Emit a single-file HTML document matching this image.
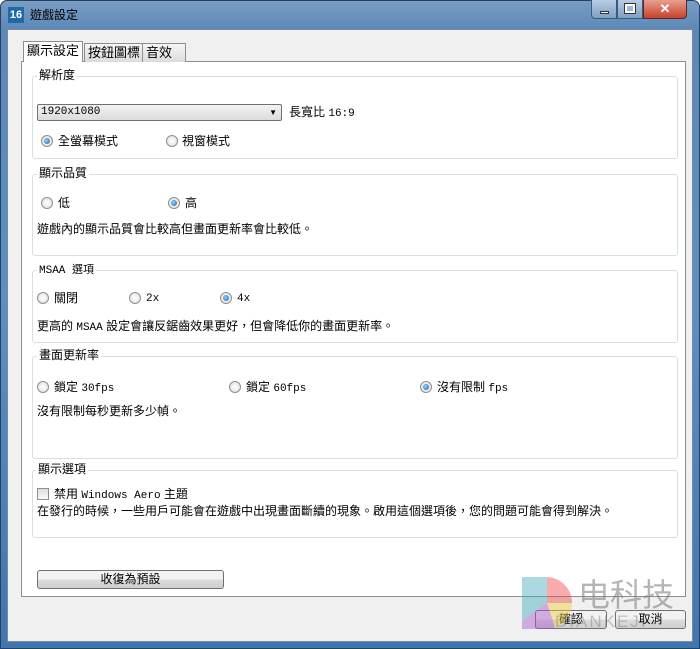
<!DOCTYPE html>
<html><head><meta charset="utf-8"><style>
*{margin:0;padding:0;box-sizing:border-box}
body{width:700px;height:649px;overflow:hidden;background:#fff;font-family:"Liberation Sans","Noto Sans CJK TC",sans-serif;font-size:12px;color:#000;position:relative}
.a{position:absolute}
.frame{left:0;top:0;width:700px;height:649px;background:linear-gradient(#7a9dc4,#5a88b8 30px,#5d8fc2 300px,#3f76b0);border-radius:7px 7px 0 0;border:1px solid #28415f}
.client{left:7px;top:29px;width:686px;height:613px;background:#f0f0f0;border:1px solid #7a8a9b}
.panel{left:21px;top:61px;width:665px;height:536px;background:#fff;border:1px solid #8a8f96}
.tab{top:43px;height:19px;border:1px solid #8a8f96;border-bottom:none;background:linear-gradient(#f6f6f6,#dcdcdc);font-size:13px;line-height:17px;padding:0 3px}
.grp{left:32px;width:646px;border:1px solid #d5dfe5;border-radius:3px}
.lg{font-size:12px;background:#fff;padding:0 2px;line-height:14px}
.r{width:12px;height:12px;border-radius:50%;border:1px solid #8f8f8f;background:radial-gradient(#fff,#ddd)}
.r.on::after{content:"";position:absolute;left:2px;top:2px;width:6px;height:6px;border-radius:50%;background:radial-gradient(circle at 40% 40%,#8fd0ff,#1d5fa8)}
.t{font-size:12px;line-height:14px;white-space:nowrap}
.m{font-family:"Liberation Mono","Noto Sans CJK TC",monospace;font-size:11px}
.btn{border:1px solid #707070;border-radius:3px;background:linear-gradient(#f2f2f2 50%,#dcdcdc 50%,#cfcfcf);text-align:center;font-size:12px;line-height:16px}
</style></head><body>
<div class="a frame"></div>
<div class="a" style="left:8px;top:7px;width:16px;height:16px;background:#1d6aa8;color:#fff;font-weight:bold;font-size:11px;line-height:16px;text-align:center">16</div>
<div class="a t" style="left:30px;top:8px;font-size:12px">遊戲設定</div>
<div class="a" style="left:591px;top:0;width:26px;height:19px;border:1px solid #3a5b80;border-top:none;border-radius:0 0 0 4px;background:linear-gradient(#b9cde3,#7f9fc4)"><div class="a" style="left:8px;top:11px;width:9px;height:3px;background:#fff;border:1px solid #333"></div></div>
<div class="a" style="left:617px;top:0;width:26px;height:19px;border:1px solid #3a5b80;border-top:none;background:linear-gradient(#b9cde3,#7f9fc4)"><div class="a" style="left:7px;top:4px;width:10px;height:9px;border:2px solid #fff;outline:1px solid #333"></div></div>
<div class="a" style="left:643px;top:0;width:44px;height:19px;border:1px solid #5a2a20;border-top:none;border-radius:0 0 4px 0;background:linear-gradient(#e8a090,#c8412a);color:#fff;font-weight:bold;text-align:center;font-size:13px;line-height:17px">✕</div>
<div class="a client"></div>
<div class="a panel"></div>
<div class="a tab" style="left:23px;top:41px;height:21px;background:#fff;z-index:2">顯示設定</div>
<div class="a tab" style="left:84px">按鈕圖標</div>
<div class="a tab" style="left:142px;width:44px">音效</div>

<div class="a grp" style="top:76px;height:83px"></div>
<div class="a lg" style="left:37px;top:68px">解析度</div>
<div class="a" style="left:37px;top:104px;width:245px;height:17px;border:1px solid #707070;border-radius:2px;background:linear-gradient(#f2f2f2,#dcdcdc)"><span class="a m" style="left:3px;top:1px">1920x1080</span><span class="a" style="right:4px;top:3px;font-size:8px">▼</span></div>
<div class="a t" style="left:289px;top:105px">長寬比 <span class="m">16:9</span></div>
<div class="a r on" style="left:41px;top:135px"></div><div class="a t" style="left:58px;top:134px">全螢幕模式</div>
<div class="a r" style="left:166px;top:135px"></div><div class="a t" style="left:182px;top:134px">視窗模式</div>

<div class="a grp" style="top:174px;height:82px"></div>
<div class="a lg" style="left:37px;top:166px">顯示品質</div>
<div class="a r" style="left:41px;top:197px"></div><div class="a t" style="left:58px;top:196px">低</div>
<div class="a r on" style="left:168px;top:197px"></div><div class="a t" style="left:185px;top:196px">高</div>
<div class="a t" style="left:37px;top:222px">遊戲內的顯示品質會比較高但畫面更新率會比較低。</div>

<div class="a grp" style="top:270px;height:73px"></div>
<div class="a lg m" style="left:37px;top:262px">MSAA <span style="font-family:'Noto Sans CJK TC'">選項</span></div>
<div class="a r" style="left:37px;top:292px"></div><div class="a t" style="left:54px;top:291px">關閉</div>
<div class="a r" style="left:129px;top:292px"></div><div class="a t m" style="left:146px;top:292px">2x</div>
<div class="a r on" style="left:220px;top:292px"></div><div class="a t m" style="left:237px;top:292px">4x</div>
<div class="a t" style="left:37px;top:319px">更高的 <span class="m">MSAA</span> 設定會讓反鋸齒效果更好，但會降低你的畫面更新率。</div>

<div class="a grp" style="top:356px;height:103px"></div>
<div class="a lg" style="left:37px;top:348px">畫面更新率</div>
<div class="a r" style="left:37px;top:381px"></div><div class="a t" style="left:54px;top:380px">鎖定 <span class="m">30fps</span></div>
<div class="a r" style="left:229px;top:381px"></div><div class="a t" style="left:246px;top:380px">鎖定 <span class="m">60fps</span></div>
<div class="a r on" style="left:420px;top:381px"></div><div class="a t" style="left:437px;top:380px">沒有限制 <span class="m">fps</span></div>
<div class="a t" style="left:37px;top:404px">沒有限制每秒更新多少幀。</div>

<div class="a grp" style="top:470px;height:68px"></div>
<div class="a lg" style="left:36px;top:462px">顯示選項</div>
<div class="a" style="left:37px;top:488px;width:12px;height:12px;border:1px solid #8f8f8f;background:linear-gradient(#ddd,#fafafa)"></div>
<div class="a t" style="left:54px;top:487px">禁用 <span class="m">Windows Aero</span> 主題</div>
<div class="a t" style="left:37px;top:504px">在發行的時候，一些用戶可能會在遊戲中出現畫面斷續的現象。啟用這個選項後，您的問題可能會得到解決。</div>

<div class="a btn" style="left:37px;top:570px;width:187px;height:19px">收復為預設</div>
<div class="a btn" style="left:535px;top:610px;width:72px;height:19px">確認</div>
<div class="a btn" style="left:615px;top:610px;width:71px;height:19px">取消</div>
<div class="a" style="left:522px;top:577px;width:50px;height:52px;opacity:.45;background:conic-gradient(#e44 0 25%,#ec3 25% 45%,#a5c 45% 65%,#4ab 65% 100%);border-radius:0 26px 26px 0"></div>
<div class="a" style="left:578px;top:578px;font-size:32px;color:rgba(120,120,120,.55);line-height:34px">电科技</div>
<div class="a" style="left:555px;top:612px;font-size:17px;color:rgba(120,120,120,.4);letter-spacing:2px">DIANKEJI</div>
</body></html>
